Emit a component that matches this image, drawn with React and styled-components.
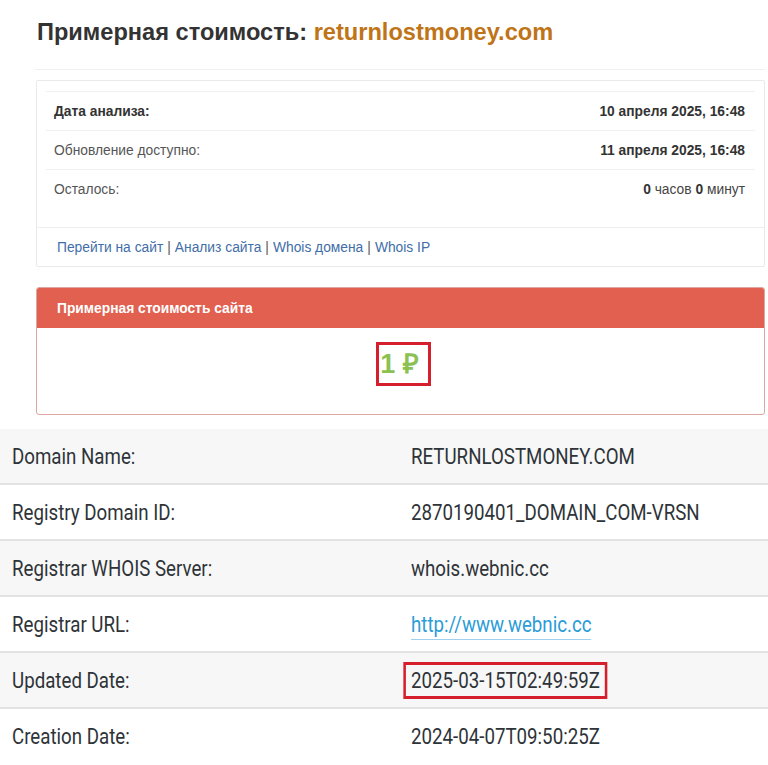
import styled, { createGlobalStyle } from "styled-components";

const GlobalStyle = createGlobalStyle`
  body {
    margin: 0;
    background: #fff;
    font-family: "Liberation Sans", Arial, sans-serif;
    color: #333;
  }
`;

const Top = styled.div`
  padding: 0 3px 0 36px;
`;

const Title = styled.h1`
  margin: 0;
  padding: 18px 0 0 1px;
  height: 33px;
  font-size: 23.6px;
  line-height: 28px;
  font-weight: 700;
  color: #333;
`;

const Domain = styled.span`
  color: #c07418;
`;

const Rule = styled.hr`
  margin: 18px 0 10px -1px;
  border: 0;
  border-top: 1px solid #f0f0f0;
`;

const Card = styled.div`
  border: 1px solid #e9e9e9;
  border-radius: 2px;
`;

const CardBody = styled.div`
  padding: 10px 9px 19px 9px;
`;

const InfoRow = styled.div`
  display: flex;
  justify-content: space-between;
  align-items: center;
  height: 38px;
  padding: 0 10px 0 8px;
  border-top: 1px solid #f1f1f1;
  font-size: 13.8px;
  color: #444;
`;

const Label = styled.span`
  font-weight: ${(p) => (p.$bold ? 700 : 400)};
  color: ${(p) => (p.$bold ? "#333" : "#555")};
`;

const Strong = styled.b`
  color: #333;
`;

const CardFooter = styled.div`
  border-top: 1px solid #eee;
  padding: 0 20px;
  height: 38px;
  display: flex;
  align-items: center;
  font-size: 13.8px;
  color: #555;
`;

const Link = styled.a`
  color: #3f6ea8;
  text-decoration: none;
`;

const Sep = styled.span`
  margin: 0 4px;
`;

const Panel = styled.div`
  margin-top: 20px;
  border: 1px solid #dca7a0;
  border-radius: 3px;
  overflow: hidden;
`;

const PanelHead = styled.div`
  background: #e2604f;
  height: 40px;
  padding: 0 20px;
  display: flex;
  align-items: center;
  color: #fff;
  font-size: 13.8px;
  font-weight: 700;
`;

const PanelBody = styled.div`
  height: 86px;
  display: flex;
  justify-content: center;
  padding-top: 14px;
  box-sizing: border-box;
`;

const PriceBox = styled.div`
  align-self: flex-start;
  border: 3px solid #d61f2d;
  padding: 5px 9px 5px 1px;
  margin-left: 6px;
  font-size: 27px;
  line-height: 28px;
  font-weight: 700;
  color: #8cc152;
`;

const Whois = styled.div`
  margin-top: 14px;
  font-family: "Roboto", sans-serif;
  font-size: 22px;
  color: #2e3338;
`;

const WRow = styled.div`
  display: grid;
  grid-template-columns: 399px 1fr;
  align-items: center;
  height: 54px;
  background: ${(p) => (p.$alt ? "#f7f7f7" : "#fff")};
  border-top: ${(p) => (p.$first ? "none" : "2px solid #e2e2e2")};
`;

const Cell = styled.div`
  padding-left: 12px;
  white-space: nowrap;
`;

const Narrow = styled.span`
  display: inline-block;
  transform: scaleX(0.85);
  transform-origin: left center;
`;

const WLink = styled.a`
  color: #2a9cd8;
  text-decoration: none;
  border-bottom: 1px solid #9fd0ee;
  padding-bottom: 2px;
`;

const Mark = styled.span`
  display: inline-block;
  border: 3px solid #d61f2d;
  border-left-width: 3.5px;
  border-right-width: 3.5px;
  padding: 3px 6px;
  margin-left: -9px;
`;

const rows = [
  ["Domain Name:", "RETURNLOSTMONEY.COM"],
  ["Registry Domain ID:", "2870190401_DOMAIN_COM-VRSN"],
  ["Registrar WHOIS Server:", "whois.webnic.cc"],
  ["Registrar URL:", "http://www.webnic.cc", "link"],
  ["Updated Date:", "2025-03-15T02:49:59Z", "mark"],
  ["Creation Date:", "2024-04-07T09:50:25Z"],
];

export default function App() {
  return (
    <>
      <GlobalStyle />
      <Top>
        <Title>
          Примерная стоимость: <Domain>returnlostmoney.com</Domain>
        </Title>
        <Rule />
        <Card>
          <CardBody>
            <InfoRow>
              <Label $bold>Дата анализа:</Label>
              <Strong>10 апреля 2025, 16:48</Strong>
            </InfoRow>
            <InfoRow>
              <Label>Обновление доступно:</Label>
              <Strong>11 апреля 2025, 16:48</Strong>
            </InfoRow>
            <InfoRow>
              <Label>Осталось:</Label>
              <span>
                <Strong>0</Strong> часов <Strong>0</Strong> минут
              </span>
            </InfoRow>
          </CardBody>
          <CardFooter>
            <Link href="#">Перейти на сайт</Link>
            <Sep>|</Sep>
            <Link href="#">Анализ сайта</Link>
            <Sep>|</Sep>
            <Link href="#">Whois домена</Link>
            <Sep>|</Sep>
            <Link href="#">Whois IP</Link>
          </CardFooter>
        </Card>
        <Panel>
          <PanelHead>Примерная стоимость сайта</PanelHead>
          <PanelBody>
            <PriceBox>1 ₽</PriceBox>
          </PanelBody>
        </Panel>
      </Top>
      <Whois>
        {rows.map(([k, v, kind], i) => (
          <WRow key={k} $alt={i % 2 === 0} $first={i === 0}>
            <Cell>
              <Narrow>{k}</Narrow>
            </Cell>
            <Cell>
              <Narrow>
                {kind === "link" ? (
                  <WLink href="#">{v}</WLink>
                ) : kind === "mark" ? (
                  <Mark>{v}</Mark>
                ) : (
                  v
                )}
              </Narrow>
            </Cell>
          </WRow>
        ))}
      </Whois>
    </>
  );
}
